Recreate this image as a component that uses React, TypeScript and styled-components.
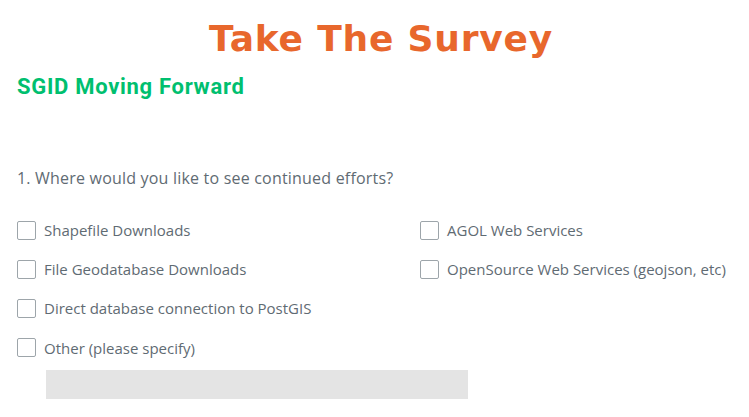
import React from 'react'
import styled, { createGlobalStyle } from 'styled-components'

const GlobalStyle = createGlobalStyle`
  html, body {
    margin: 0;
    padding: 0;
    background: #ffffff;
  }
`

const leftOptions = [
  'Shapefile Downloads',
  'File Geodatabase Downloads',
  'Direct database connection to PostGIS',
  'Other (please specify)',
]

const rightOptions = [
  'AGOL Web Services',
  'OpenSource Web Services (geojson, etc)',
]

const Page = styled.div`
  width: 749px;
  height: 417px;
  overflow: hidden;
  padding: 0 17px;
  box-sizing: border-box;
`

const Title = styled.h1`
  margin: 0;
  padding-top: 16px;
  padding-left: 13px;
  text-align: center;
  font-family: "DejaVu Sans", Verdana, sans-serif;
  font-weight: 700;
  font-size: 36px;
  letter-spacing: 0.8px;
  line-height: 46px;
  color: #e8672c;
`

const SurveyTitle = styled.h2`
  margin: 0;
  margin-top: 12px;
  font-family: Roboto, "Open Sans", sans-serif;
  font-weight: 700;
  font-size: 22px;
  letter-spacing: 0.7px;
  line-height: 26px;
  color: #00bf6f;
`

const Question = styled.div`
  margin-top: 66px;
  font-family: "Open Sans", sans-serif;
  font-size: 16px;
  letter-spacing: 0.2px;
  line-height: 24px;
  color: #5f6b73;
`

const Options = styled.div`
  margin-top: 28px;
  display: grid;
  grid-template-columns: 403px 1fr;
`

const Column = styled.div`
  display: flex;
  flex-direction: column;
  gap: 15.2px;
`

const Option = styled.label`
  display: flex;
  align-items: center;
  gap: 8px;
  height: 24px;
  font-family: "Open Sans", sans-serif;
  font-size: 15px;
  color: #5f6b73;
`

const Box = styled.span`
  width: 17px;
  height: 17px;
  border: 1px solid #9da5aa;
  border-radius: 2px;
  background: #fff;
  flex: none;
`

const OtherInput = styled.div`
  margin-top: 10px;
  margin-left: 29px;
  width: 422px;
  height: 29px;
  background: #e4e4e4;
`

export default function App() {
  return (
    <Page>
      <GlobalStyle />
      <Title>Take The Survey</Title>
      <SurveyTitle>SGID Moving Forward</SurveyTitle>
      <Question>1. Where would you like to see continued efforts?</Question>
      <Options>
        <Column>
          {leftOptions.map(o => (
            <Option key={o}>
              <Box />
              {o}
            </Option>
          ))}
        </Column>
        <Column>
          {rightOptions.map(o => (
            <Option key={o}>
              <Box />
              {o}
            </Option>
          ))}
        </Column>
      </Options>
      <OtherInput />
    </Page>
  )
}
